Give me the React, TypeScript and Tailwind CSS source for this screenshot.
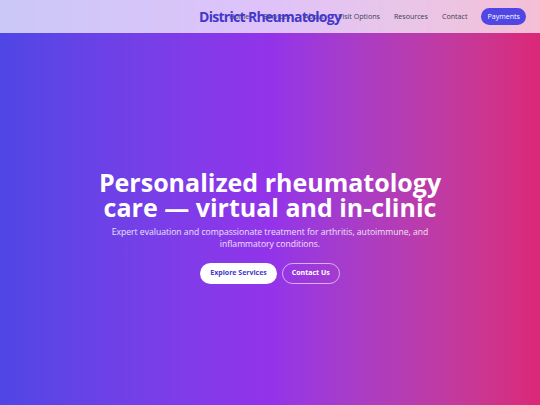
export default function App() {
  return (
    <div className="relative w-[540px] h-[405px] overflow-hidden bg-gradient-to-r from-[#4f46e5] via-[#9333ea] to-[#db2777]" style={{ fontFamily: '"Open Sans", "Noto Sans", sans-serif' }}>
      <header className="relative h-[33px] bg-white/70 flex items-center justify-end pr-[14px]">
        <nav className="flex items-center text-[7.1px] text-[#374151]">
          <a className="mr-[14px]">Home</a>
          <a className="mr-[14px]">Services</a>
          <a className="mr-[14px]">About</a>
          <a className="mr-[14px]">Visit Options</a>
          <a className="mr-[14px]">Resources</a>
          <a className="mr-[14px]">Contact</a>
          <a className="h-[17px] px-[6px] rounded-full bg-[#4f46e5] text-white flex items-center">Payments</a>
        </nav>
        <div className="absolute left-[199px] top-[8px] text-[14px] leading-[18px] font-bold text-[#4338ca] tracking-[-0.7px]">District Rheumatology</div>
      </header>
      <section className="flex flex-col items-center text-center pt-[137px]">
        <h1 className="text-[25px] leading-[25px] font-bold text-white">Personalized rheumatology<br />care — virtual and in-clinic</h1>
        <p className="mt-[6px] text-[8.6px] leading-[12px] text-white/85 w-[330px]">Expert evaluation and compassionate treatment for arthritis, autoimmune, and inflammatory conditions.</p>
        <div className="mt-[13px] flex gap-[5px]">
          <a className="h-[21px] px-[10px] rounded-full bg-white text-[#4338ca] text-[7px] font-bold flex items-center">Explore Services</a>
          <a className="h-[21px] px-[9px] rounded-full border border-white/60 text-white text-[7px] font-bold flex items-center">Contact Us</a>
        </div>
      </section>
    </div>
  );
}
